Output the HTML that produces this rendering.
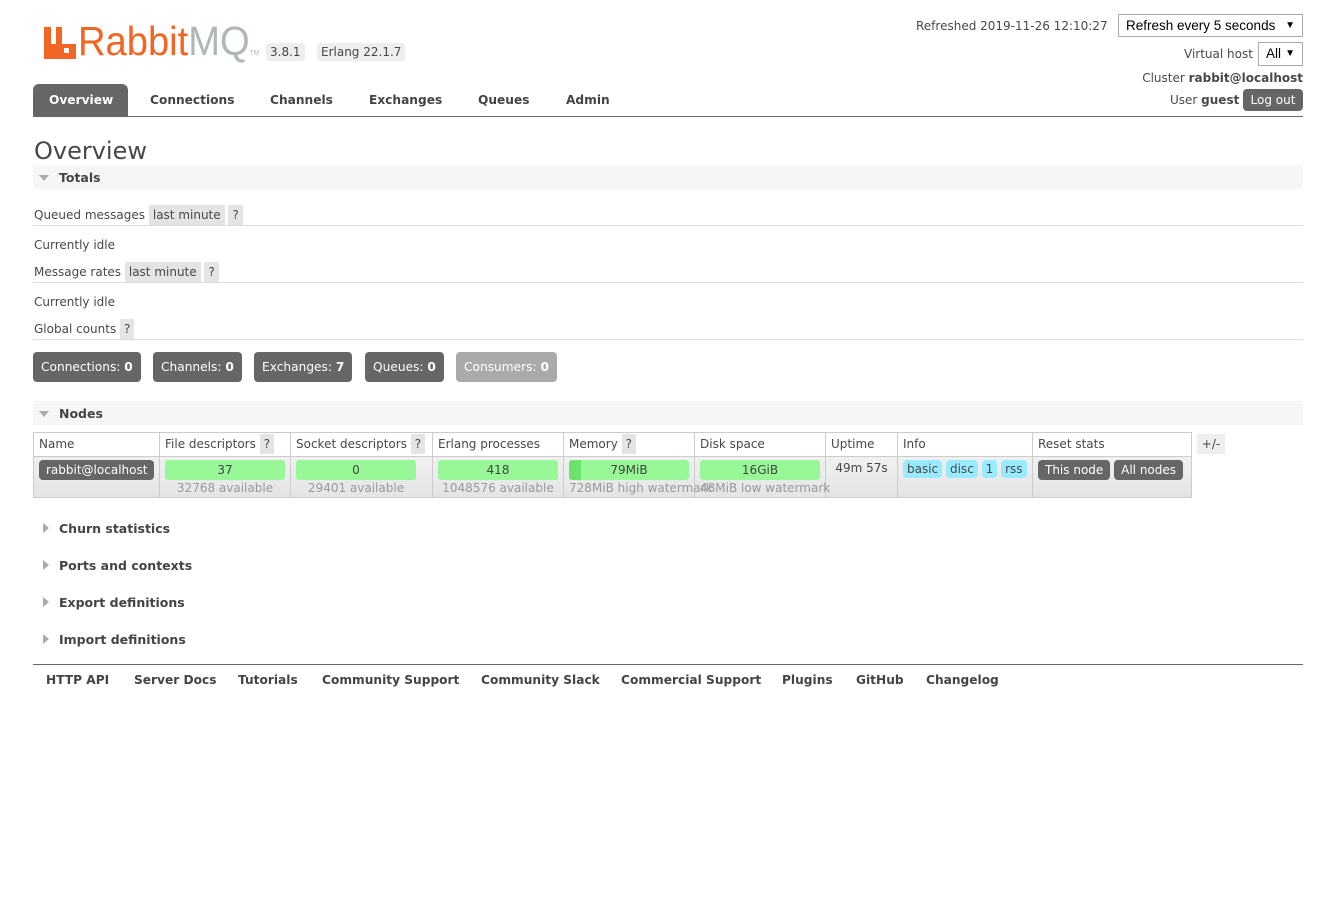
<!DOCTYPE html>
<html><head><meta charset="utf-8"><style>
body{margin:0;background:#fff;font-family:"DejaVu Sans","Liberation Sans",sans-serif;font-size:12px;color:#484848;position:relative;width:1336px;height:904px;overflow:hidden}
.a{position:absolute;white-space:nowrap}
.nav{font-weight:bold;color:#444;font-size:12.2px}
.pill{background:#eee;border-radius:3px;padding:2px 4px}
.gray{background:#e4e4e4;padding:3px 4px}
.sec{position:absolute;left:33px;width:1270px;height:24px;background:#f6f6f6}
.hr{position:absolute;left:33px;width:1270px;height:1px;background:#ddd}
.badge{position:absolute;top:352px;height:30px;line-height:30px;background:#666;color:#fff;border-radius:4px;padding:0 8px;font-size:12.2px}
.tri{position:absolute;width:0;height:0;border-left:5px solid transparent;border-right:5px solid transparent;border-top:6px solid #aaa}
.trr{position:absolute;width:0;height:0;border-top:5px solid transparent;border-bottom:5px solid transparent;border-left:6px solid #aaa}
.sh{position:absolute;left:59px;font-weight:bold;font-size:12.5px;color:#444}
td{border:1px solid #ccc;padding:0 5px;vertical-align:top;white-space:nowrap;overflow:visible}
table{border-collapse:collapse;position:absolute;left:33px;top:432px;table-layout:fixed;width:1158px}
.g{background:#98f898;border-radius:3px;height:20px;line-height:20px;text-align:center;color:#444;width:120px}
.av{color:#999;text-align:center;line-height:16px;width:120px}
.dk{background:#666;color:#fff;border-radius:4px;padding:3px 7px;display:inline-block}
.bl{background:#99ebff;border-radius:4px;padding:2px 4px;display:inline-block}
</style></head><body>
<svg class="a" style="left:44px;top:27px" width="33" height="32" viewBox="0 0 33 32"><path fill="#f26522" d="M0 0H7V17H12V0H18V17H32V32H0Z"/><rect x="20" y="21" width="5" height="5" fill="#fff"/></svg>
<div class="a" style="left:78px;top:18px;font-family:'Liberation Sans',sans-serif;font-size:41px;color:#f26522;transform:scaleX(0.93);transform-origin:0 0">Rabbit<span style="color:#b0b8b4">MQ</span><span style="font-size:7px;color:#b0b8b4">TM</span></div>
<div class="a pill" style="left:266px;top:43px">3.8.1</div>
<div class="a pill" style="left:317px;top:43px">Erlang 22.1.7</div>

<div class="a" style="left:916px;top:19px">Refreshed 2019-11-26 12:10:27</div>
<div class="a" style="left:1118px;top:14px;height:23px;border:1px solid #aaa;color:#000;font-family:'Liberation Sans',sans-serif;font-size:13.5px;line-height:22px;padding-left:7px;box-sizing:border-box;width:185px">Refresh every 5 seconds<span style="position:absolute;right:7px;font-size:10px">▼</span></div>
<div class="a" style="left:1184px;top:47px">Virtual host</div>
<div class="a" style="left:1258px;top:42px;width:45px;height:24px;border:1px solid #aaa;box-sizing:border-box;color:#000;font-family:'Liberation Sans',sans-serif;font-size:13.5px;line-height:22px;padding-left:7px">All<span style="position:absolute;right:7px;font-size:10px">▼</span></div>
<div class="a" style="right:33px;top:71px">Cluster <b>rabbit@localhost</b></div>
<div class="a" style="left:1170px;top:93px">User <b>guest</b></div>
<div class="a" style="left:1243px;top:89px;width:60px;height:22px;background:#666;color:#fff;border-radius:4px;text-align:center;line-height:22px">Log out</div>

<div class="a" style="left:33px;top:84px;width:95px;height:32px;background:#666;border-radius:6px 6px 0 0"></div>
<div class="a nav" style="left:49px;top:93px;color:#fff">Overview</div>
<div class="a nav" style="left:150px;top:93px">Connections</div>
<div class="a nav" style="left:270px;top:93px">Channels</div>
<div class="a nav" style="left:369px;top:93px">Exchanges</div>
<div class="a nav" style="left:478px;top:93px">Queues</div>
<div class="a nav" style="left:566px;top:93px">Admin</div>
<div class="a" style="left:33px;top:116px;width:1270px;height:1px;background:#666"></div>

<div class="a" style="left:34px;top:137px;font-size:24px;color:#484848">Overview</div>
<div class="sec" style="top:165px"></div><div class="tri" style="left:39px;top:175px"></div><div class="sh" style="top:170px">Totals</div>

<div class="a" style="left:34px;top:208px">Queued messages <span class="gray">last minute</span> <span class="gray">?</span></div>
<div class="hr" style="top:225px"></div>
<div class="a" style="left:34px;top:238px">Currently idle</div>
<div class="a" style="left:34px;top:265px">Message rates <span class="gray">last minute</span> <span class="gray">?</span></div>
<div class="hr" style="top:282px"></div>
<div class="a" style="left:34px;top:295px">Currently idle</div>
<div class="a" style="left:34px;top:322px">Global counts <span class="gray">?</span></div>
<div class="hr" style="top:339px"></div>

<div class="badge" style="left:33px">Connections: <b>0</b></div>
<div class="badge" style="left:153px">Channels: <b>0</b></div>
<div class="badge" style="left:254px">Exchanges: <b>7</b></div>
<div class="badge" style="left:365px">Queues: <b>0</b></div>
<div class="badge" style="left:456px;background:#aaa">Consumers: <b>0</b></div>

<div class="sec" style="top:401px"></div><div class="tri" style="left:39px;top:411px"></div><div class="sh" style="top:406px">Nodes</div>

<table>
<colgroup><col style="width:126px"><col style="width:131px"><col style="width:142px"><col style="width:131px"><col style="width:131px"><col style="width:131px"><col style="width:72px"><col style="width:135px"><col style="width:159px"></colgroup>
<tr style="height:24px;line-height:22px;background:#fff">
<td>Name</td><td>File descriptors <span class="gray">?</span></td><td>Socket descriptors <span class="gray">?</span></td><td>Erlang processes</td><td>Memory <span class="gray">?</span></td><td>Disk space</td><td>Uptime</td><td>Info</td><td>Reset stats</td></tr>
<tr style="height:41px;background:linear-gradient(#f0f0f0,#e4e4e4)">
<td style="padding-top:3px"><span class="dk">rabbit@localhost</span></td>
<td style="padding-top:3px"><div class="g">37</div><div class="av">32768 available</div></td>
<td style="padding-top:3px"><div class="g">0</div><div class="av">29401 available</div></td>
<td style="padding-top:3px"><div class="g">418</div><div class="av">1048576 available</div></td>
<td style="padding-top:3px"><div class="g" style="background:linear-gradient(90deg,#6be26b 12px,#98f898 12px)">79MiB</div><div class="av" style="text-align:left">728MiB high watermark</div></td>
<td style="padding-top:3px"><div class="g">16GiB</div><div class="av" style="text-align:left;margin-left:0">48MiB low watermark</div></td>
<td style="padding-top:4px;text-align:center">49m 57s</td>
<td style="padding-top:3px"><span class="bl">basic</span> <span class="bl">disc</span> <span class="bl">1</span> <span class="bl">rss</span></td>
<td style="padding-top:3px"><span class="dk">This node</span> <span class="dk">All nodes</span></td>
</tr></table>
<div class="a" style="left:1197px;top:434px;width:28px;height:20px;background:#eee;text-align:center;line-height:20px">+/-</div>

<div class="trr" style="left:43px;top:523px"></div><div class="sh" style="top:521px">Churn statistics</div>
<div class="trr" style="left:43px;top:560px"></div><div class="sh" style="top:558px">Ports and contexts</div>
<div class="trr" style="left:43px;top:597px"></div><div class="sh" style="top:595px">Export definitions</div>
<div class="trr" style="left:43px;top:634px"></div><div class="sh" style="top:632px">Import definitions</div>

<div class="a" style="left:33px;top:664px;width:1270px;height:1px;background:#666"></div>
<div class="a nav" style="left:46px;top:673px">HTTP API</div>
<div class="a nav" style="left:134px;top:673px">Server Docs</div>
<div class="a nav" style="left:238px;top:673px">Tutorials</div>
<div class="a nav" style="left:322px;top:673px">Community Support</div>
<div class="a nav" style="left:481px;top:673px">Community Slack</div>
<div class="a nav" style="left:621px;top:673px">Commercial Support</div>
<div class="a nav" style="left:782px;top:673px">Plugins</div>
<div class="a nav" style="left:856px;top:673px">GitHub</div>
<div class="a nav" style="left:926px;top:673px">Changelog</div>
</body></html>
